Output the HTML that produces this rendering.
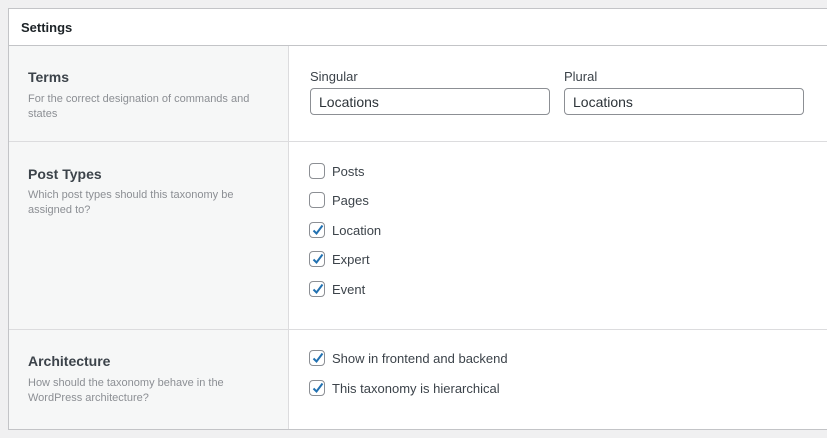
<!DOCTYPE html>
<html><head><style>
body{margin:0;width:827px;height:438px;background:#f0f0f1;font-family:"Liberation Sans",sans-serif;color:#1d2327;position:relative;overflow:hidden}
.box{position:absolute;left:8px;top:8px;width:830px;height:420px;background:#fff;border:1px solid #c3c4c7}
.hd{position:absolute;left:0;top:0;right:0;height:36px;border-bottom:1px solid #c3c4c7}
.hd span{position:absolute;left:12px;top:11px;font-size:13px;font-weight:bold}
.left{position:absolute;left:0;width:279px;background:#f6f7f7;border-right:1px solid #dcdcde}
.row{position:absolute;left:0;right:0;border-bottom:1px solid #dcdcde}
.t{position:absolute;left:19px;font-size:14px;font-weight:bold;color:#3c434a}
.d{position:absolute;left:19px;font-size:11px;color:#8c8f94;line-height:15px;width:230px}
.lab{position:absolute;font-size:13px;color:#3c434a}
.inp{position:absolute;height:27px;width:237px;border:1px solid #8c8f94;border-radius:4px;font-size:14px;line-height:27px;box-sizing:border-box;padding-left:8px;color:#2c3338}
.cb{position:absolute;left:300px;width:16px;height:16px;border:1px solid #8c8f94;border-radius:4px;box-sizing:border-box;background:#fff}
.cb svg{position:absolute;left:1px;top:0}
.cl{position:absolute;left:323px;font-size:13px;color:#3c434a}
</style></head><body>
<div class="box">
<div class="hd"><span>Settings</span></div>
<div class="row" style="top:37px;height:95px"><div class="left" style="top:0;height:95px"></div>
<div class="t" style="top:23px">Terms</div>
<div class="d" style="top:46px">For the correct designation of commands and states</div>
<div class="lab" style="left:301px;top:23px">Singular</div>
<div class="lab" style="left:555px;top:23px">Plural</div>
<div class="inp" style="left:301px;top:42px;width:240px">Locations</div>
<div class="inp" style="left:555px;top:42px;width:240px">Locations</div>
</div>
<div class="row" style="top:133px;height:187px"><div class="left" style="top:0;height:187px"></div>
<div class="t" style="top:24px">Post Types</div>
<div class="d" style="top:46px">Which post types should this taxonomy be assigned to?</div>
</div>
<div class="row" style="top:321px;height:99px;border-bottom:none"><div class="left" style="top:0;height:99px"></div>
<div class="t" style="top:23px">Architecture</div>
<div class="d" style="top:46px">How should the taxonomy behave in the WordPress architecture?</div>
</div>
<div class="cb" style="top:154px"></div><div class="cl" style="top:155px">Posts</div>
<div class="cb" style="top:183px"></div><div class="cl" style="top:184px">Pages</div>
<div class="cb" style="top:213px"><svg width="14" height="14" viewBox="0 0 14 14"><path d="M2.5 7.5 L5.5 10.5 L11.5 2.5" fill="none" stroke="#2271b1" stroke-width="2"/></svg></div><div class="cl" style="top:214px">Location</div>
<div class="cb" style="top:242px"><svg width="14" height="14" viewBox="0 0 14 14"><path d="M2.5 7.5 L5.5 10.5 L11.5 2.5" fill="none" stroke="#2271b1" stroke-width="2"/></svg></div><div class="cl" style="top:243px">Expert</div>
<div class="cb" style="top:272px"><svg width="14" height="14" viewBox="0 0 14 14"><path d="M2.5 7.5 L5.5 10.5 L11.5 2.5" fill="none" stroke="#2271b1" stroke-width="2"/></svg></div><div class="cl" style="top:273px">Event</div>
<div class="cb" style="top:341px"><svg width="14" height="14" viewBox="0 0 14 14"><path d="M2.5 7.5 L5.5 10.5 L11.5 2.5" fill="none" stroke="#2271b1" stroke-width="2"/></svg></div><div class="cl" style="top:342px">Show in frontend and backend</div>
<div class="cb" style="top:371px"><svg width="14" height="14" viewBox="0 0 14 14"><path d="M2.5 7.5 L5.5 10.5 L11.5 2.5" fill="none" stroke="#2271b1" stroke-width="2"/></svg></div><div class="cl" style="top:372px">This taxonomy is hierarchical</div>
</div>
</body></html>
